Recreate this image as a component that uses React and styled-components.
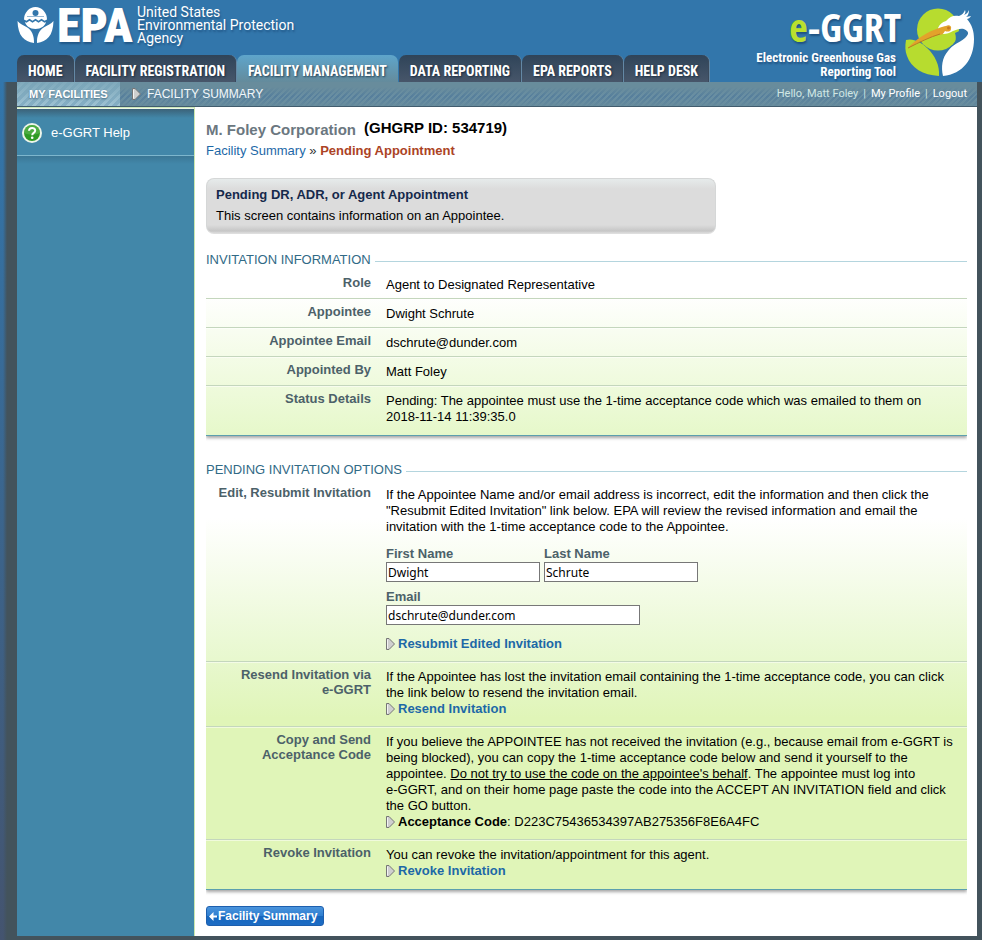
import React from 'react';
import styled, { createGlobalStyle } from 'styled-components';

const slate = '#43535c';
const sans = '"Liberation Sans", Arial, sans-serif';
const condensed = '"Roboto Condensed", "Liberation Sans", sans-serif';

const GlobalStyle = createGlobalStyle`
  * { box-sizing: border-box; }
  body {
    margin: 0;
    background: #3276ab;
    color: #000;
    font: 13px/16px ${sans};
  }
`;

const Page = styled.div`
  display: flex;
  flex-direction: column;
  min-height: 100vh;
`;

const Header = styled.header`
  display: flex;
  justify-content: space-between;
  height: 82px;
  padding: 0 7px 0 17px;
  background: #3276ab;
`;

const HeaderLeft = styled.div`
  display: flex;
  flex-direction: column;
  justify-content: space-between;
`;

const AgencyLink = styled.a`
  display: flex;
  align-items: flex-start;
  gap: 2px;
  padding-top: 6px;
  color: #fff;
  text-decoration: none;
  text-shadow: 1px 2px 2px rgba(0, 30, 70, 0.35);
`;

const AgencyMark = styled.span`
  width: 78px;
  font: 900 48px/40px ${condensed};
`;

const AgencyName = styled.span`
  font: 400 14px/13px Roboto, ${sans};
`;

const Tabs = styled.nav`
  display: flex;
  gap: 1px;
`;

const Tab = styled.a`
  height: 27px;
  padding: 3px 11px 0;
  border-radius: 7px 7px 0 0;
  background: ${p => (p.$active
    ? 'linear-gradient(#5ea5cb, #648b9c)'
    : 'linear-gradient(#2f4459, #47566a)')};
  box-shadow: ${p => (p.$active ? 'none' : 'inset -1px 0 #3a4a5c, 1px 0 #6488a5')};
  color: #fff;
  font: bold 14px/26px ${condensed};
  text-decoration: none;
  text-shadow: 1px 1px 2px rgba(10, 30, 50, 0.7);
  white-space: nowrap;
`;

const Brand = styled.div`
  display: flex;
  gap: 4px;
  color: #fff;
  text-shadow: 1px 2px 2px rgba(0, 30, 70, 0.4);
`;

const BrandText = styled.div`
  display: flex;
  flex-direction: column;
  align-items: flex-end;
  padding-top: 3px;
`;

const BrandTitle = styled.div`
  height: 48px;
  font: bold 40px/48px "Open Sans Condensed", ${condensed};
`;

const BrandInitial = styled.span`
  color: #b9e02f;
`;

const BrandLine = styled.div`
  margin-right: 5px;
  font: bold 13px/14px ${condensed};
`;

const BirdSlot = styled.div`
  padding-top: 6px;
`;

const Body = styled.div`
  flex: 1;
  display: flex;
  flex-direction: column;
  padding: 0 5px 4px 17px;
  background:
    linear-gradient(90deg, rgba(67, 83, 92, 0) 3px, ${slate} 7px) 0 0 / 17px 100% no-repeat,
    linear-gradient(#3276ab, #44546f) 0 0 / 7px 100% no-repeat,
    ${slate};
`;

const SubNav = styled.nav`
  display: flex;
  align-items: center;
  height: 25px;
  border-bottom: 1px solid #415c6e;
  color: #fff;
  font-size: 12px;
  background:
    linear-gradient(#688c9c 20%, rgba(104, 140, 156, 0.4) 60%, rgba(104, 140, 156, 0.9)),
    repeating-linear-gradient(135deg, #4a769c 0 2px, #6990a7 2px 4px);
`;

const SubNavCurrent = styled.a`
  align-self: stretch;
  width: 103px;
  padding-left: 12px;
  color: #fff;
  font: bold 11px/24px ${sans};
  text-decoration: none;
  text-shadow: 0 1px 2px #45697f;
  background:
    linear-gradient(rgba(123, 166, 184, 0.9), rgba(145, 186, 204, 0.5)),
    repeating-linear-gradient(135deg, #79a3bc 0 3px, #a9c9d9 3px 6px);
`;

const SubNavItem = styled.a`
  display: flex;
  align-items: center;
  gap: 5px;
  margin-left: 12px;
  color: #f2f7fa;
  text-decoration: none;
`;

const UserMenu = styled.div`
  display: flex;
  gap: 5px;
  margin-left: auto;
  padding-right: 10px;
  color: #cfe6e4;
  font: 400 11px/24px Roboto, ${sans};
`;

const UserLink = styled.a`
  color: #fff;
  text-decoration: none;
`;

const Columns = styled.div`
  flex: 1;
  display: flex;
  background: #fff;
`;

const Sidebar = styled.aside`
  width: 178px;
  padding-top: 2px;
  border-right: 1px solid #cbe7ae;
  background: linear-gradient(#b9dfa0, #fff) 0 0 / 100% 2px no-repeat, #fff;
`;

const SidebarInner = styled.div`
  height: 100%;
  background: #4287a9;
`;

const HelpLink = styled.a`
  display: flex;
  align-items: center;
  gap: 9px;
  height: 47px;
  padding: 1px 0 0 5px;
  border-bottom: 1px solid #7db6cd;
  color: #fff;
  text-decoration: none;
  background: linear-gradient(#3b6278, #4287a9 9px);
`;

const SidebarShade = styled.div`
  height: 8px;
  background: linear-gradient(#3b7795, #4287a9);
`;

const Main = styled.main`
  flex: 1;
  padding: 12px 10px 9px 11px;
`;

const Company = styled.h1`
  display: flex;
  gap: 8px;
  margin: 0;
  color: #6b7780;
  font: bold 15px/22px ${sans};
`;

const GhgrpId = styled.span`
  color: #000;
  font: bold 15px/18px ${sans};
`;

const Crumbs = styled.nav`
  line-height: 20px;
  color: #333;
`;

const TextLink = styled.a`
  color: #1d68a7;
  font-weight: ${p => (p.$bold ? 'bold' : 'normal')};
  text-decoration: none;
`;

const Current = styled.strong`
  color: #ac4325;
`;

const Intro = styled.section`
  max-width: 510px;
  height: 56px;
  margin: 17px 0 18px;
  padding: 6px 9px;
  border: 1px solid #d5d7d7;
  border-bottom-color: #dedede;
  border-radius: 8px;
  background: linear-gradient(#e6ebeb, #dcdcdc 10px, #dcdcdc 46px, #c6c6c6 52px, #dcdcdc 54px);
`;

const IntroTitle = styled.h2`
  margin: 0;
  color: #15294b;
  font: bold 13px/20px ${sans};
`;

const IntroText = styled.p`
  margin: 0;
  line-height: 21px;
`;

const Section = styled.section`
  margin-bottom: ${p => (p.$last ? 16 : 26)}px;
`;

const SectionTitle = styled.h2`
  display: flex;
  align-items: center;
  gap: 4px;
  margin: 0;
  color: #316a86;
  font: 13px/16px ${sans};
  text-transform: uppercase;

  &::after {
    content: '';
    flex: 1;
    height: 1px;
    margin-top: 2px;
    background: #b4d5de;
  }
`;

const Rows = styled.dl`
  margin: 0;
  padding-top: 2px;
  border-bottom: 1px solid #5c9fae;
  box-shadow: 0 2px 3px rgba(60, 60, 60, 0.45);
  clip-path: inset(0 0 -6px 0);
  background: ${p => (p.$tall
    ? 'linear-gradient(#fff 40px, #e8f8cf 180px, #e0f5b8 240px)'
    : 'linear-gradient(#fff 25px, #e6f8ca)')};
`;

const Row = styled.div`
  display: flex;
  gap: 15px;
  padding: 7px 10px ${p => (p.$tall ? 9 : 5)}px 0;
  border-bottom: 1px solid #c4d6bd;
  box-shadow: 0 1px rgba(255, 255, 255, 0.5);

  &:last-child {
    padding-bottom: 10px;
    border-bottom: 0;
    box-shadow: none;
  }
`;

const Term = styled.dt`
  width: 165px;
  padding-left: 10px;
  margin-top: -2px;
  color: #4c6169;
  font: bold 13px/15px ${sans};
  text-align: right;
`;

const Value = styled.dd`
  flex: 1;
  margin: 0;
`;

const NoWrap = styled.span`
  white-space: nowrap;
`;

const Action = styled.div`
  display: flex;
  align-items: center;
  gap: 2px;
`;

const Form = styled.form`
  display: grid;
  gap: 7px;
  margin: 11px 0;
`;

const FieldLine = styled.div`
  display: flex;
  flex-wrap: wrap;
  gap: 4px;
`;

const Field = styled.label`
  display: flex;
  flex-direction: column;
  width: ${p => (p.$wide ? 254 : 154)}px;
  max-width: 100%;
  color: #4c6169;
  font-weight: bold;
`;

const TextBox = styled.input`
  width: 100%;
  height: 20px;
  padding: 0 1px;
  border: 1px solid #777;
  background: #fff;
  color: #000;
  font: 12px/18px "Noto Sans", ${sans};
`;

const BackButton = styled.button`
  display: flex;
  align-items: center;
  gap: 1px;
  height: 20px;
  padding: 0 6px 0 2px;
  border: 1px solid #1d5fae;
  border-radius: 3px;
  background: linear-gradient(#4a94dc, #2f7ed0 50%, #1767bd 50%, #1d6cc4);
  color: #fff;
  font: bold 12px/18px ${sans};
`;

const EpaFlower = () => (
  <svg width="38" height="38" viewBox="0 0 38 38" aria-hidden="true">
    <g fill="#fff">
      <path d="M7 13.500a11.500 12.500 0 0 1 23 0l-2.500 1.300-3-2-3 2-3-2-3 2-3-2-3 2z" />
      <path d="M8 16l1.500.8 3-2 3 2 3-2 3 2 3-2 3 2 1.500-.8c-1 4-5 7-10.500 7S9 20 8 16z" />
      <path d="M.5 15C1 30 7 35.500 17 37c.3-7-2-13-7.500-16C6.500 19.500 3 18 .5 15z" />
      <path d="M36.500 15C36 30 30 35.500 20 37c-.3-7 2-13 7.500-16 3-1.500 6.500-3 9-6z" />
    </g>
    <circle cx="18.500" cy="7" r="3" fill="#3276ab" />
    <path d="M10 10.500h17" stroke="#3276ab" strokeWidth="1" opacity="0.5" />
  </svg>
);

const Heron = () => (
  <svg width="70" height="72" viewBox="0 0 70 72" aria-hidden="true">
    <circle cx="33" cy="23.500" r="21" fill="#b7dc2f" />
    <path d="M1 34C8 32 16 36 22 42c8 7 13 18 12 28C18 69 6 62 2 50 0 45 0 40 1 34z" fill="#b7dc2f" />
    <path d="M50 27c5-3 10-4 14-1-1 6-4 10-9 13l-8 4c3-5 5-10 3-16z" fill="#3276ab" />
    <path d="M33 22c2-4 4-6 8-7 4-5 8-6 13-5 3-1 5-3 6-6 1 2 0 4-1 5 3-1 4-3 5-5 0 3-1 6-3 7l5-1c-1 2-3 3-4 3 5 6 7 12 7 20 0 20-11 35-31 37-2-9-1-18 5-25 5-7 11-8 17-13 3-3 4-5 2-7-4-4-9-2-14 0-5 3-10 4-13 2z" fill="#fff" />
    <path d="M35 70c-1-9 1-19 7-26" fill="none" stroke="#3276ab" strokeWidth="1" />
    <path d="M3 42C11 33 22 26 34 22c3-1 5-2 7-2 3-2 6 0 5 3 0 3-4 3-6 2-2 3-3 4-6 4-10 2-20 7-31 13z" fill="#e3a22b" />
    <path d="M3 42c12-6 22-11 32-14" fill="none" stroke="#b87b22" strokeWidth="1" />
    <circle cx="43.500" cy="22" r="1.500" fill="#c97822" />
  </svg>
);

const Arrow = () => (
  <svg width="10" height="12" viewBox="0 0 10 12" aria-hidden="true">
    <path d="M.5.5h2.500l5.500 5.500-5.500 5.500H.5z" fill="#cfcfcf" stroke="#767676" />
    <path d="M1.500 1.500v9" stroke="#f3f3f3" />
  </svg>
);

const HelpIcon = () => (
  <svg width="20" height="20" viewBox="0 0 20 20" aria-hidden="true">
    <circle cx="10" cy="10" r="10" fill="#eef5ea" />
    <circle cx="10" cy="10" r="8" fill="#2f9a24" />
    <path d="M2 10a8 8 0 0 1 16 0c-5 2-11 2-16 0z" fill="#62b956" opacity="0.6" />
    <path d="M7 7.800c.2-3.700 6.200-3.700 6.200-.2 0 2.400-3 2.200-3 4.600" fill="none" stroke="#fff" strokeWidth="2" />
    <circle cx="10.200" cy="14.700" r="1.300" fill="#fff" />
  </svg>
);

const BackIcon = () => (
  <svg width="8" height="9" viewBox="0 0 8 9" aria-hidden="true">
    <path d="M0 4.500L4.500 0v3.500H8v2H4.500V9z" fill="#fff" />
  </svg>
);

const tabs = ['HOME', 'FACILITY REGISTRATION', 'FACILITY MANAGEMENT', 'DATA REPORTING', 'EPA REPORTS', 'HELP DESK'];

const invitation = [
  ['Role', 'Agent to Designated Representative'],
  ['Appointee', 'Dwight Schrute'],
  ['Appointee Email', 'dschrute@dunder.com'],
  ['Appointed By', 'Matt Foley'],
  ['Status Details', 'Pending: The appointee must use the 1-time acceptance code which was emailed to them on 2018-11-14 11:39:35.0'],
];

export default function App() {
  return (
    <Page>
      <GlobalStyle />
      <Header>
        <HeaderLeft>
          <AgencyLink href="#epa">
            <EpaFlower />
            <AgencyMark>EPA</AgencyMark>
            <AgencyName>United States<br />Environmental Protection<br />Agency</AgencyName>
          </AgencyLink>
          <Tabs>
            {tabs.map(name => (
              <Tab key={name} href="#tab" $active={name === 'FACILITY MANAGEMENT'}>{name}</Tab>
            ))}
          </Tabs>
        </HeaderLeft>
        <Brand>
          <BrandText>
            <BrandTitle><BrandInitial>e</BrandInitial>-GGRT</BrandTitle>
            <BrandLine>Electronic Greenhouse Gas</BrandLine>
            <BrandLine>Reporting Tool</BrandLine>
          </BrandText>
          <BirdSlot><Heron /></BirdSlot>
        </Brand>
      </Header>
      <Body>
        <SubNav>
          <SubNavCurrent href="#facilities">MY FACILITIES</SubNavCurrent>
          <SubNavItem href="#summary"><Arrow />FACILITY SUMMARY</SubNavItem>
          <UserMenu>
            <span>Hello, Matt Foley</span>
            <span>|</span>
            <UserLink href="#profile">My Profile</UserLink>
            <span>|</span>
            <UserLink href="#logout">Logout</UserLink>
          </UserMenu>
        </SubNav>
        <Columns>
          <Sidebar>
            <SidebarInner>
              <HelpLink href="#help"><HelpIcon />e-GGRT Help</HelpLink>
              <SidebarShade />
            </SidebarInner>
          </Sidebar>
          <Main>
            <Company>M. Foley Corporation <GhgrpId>(GHGRP ID: 534719)</GhgrpId></Company>
            <Crumbs>
              <TextLink href="#summary">Facility Summary</TextLink> » <Current>Pending Appointment</Current>
            </Crumbs>
            <Intro>
              <IntroTitle>Pending DR, ADR, or Agent Appointment</IntroTitle>
              <IntroText>This screen contains information on an Appointee.</IntroText>
            </Intro>

            <Section>
              <SectionTitle>Invitation Information</SectionTitle>
              <Rows>
                {invitation.map(([term, value]) => (
                  <Row key={term}>
                    <Term>{term}</Term>
                    <Value>{value}</Value>
                  </Row>
                ))}
              </Rows>
            </Section>

            <Section $last>
              <SectionTitle>Pending Invitation Options</SectionTitle>
              <Rows $tall>
                <Row $tall>
                  <Term>Edit, Resubmit Invitation</Term>
                  <Value>
                    If the Appointee Name and/or email address is incorrect, edit the information and then click the
                    {' '}"Resubmit Edited Invitation" link below. EPA will review the revised information and email the
                    invitation with the 1-time acceptance code to the Appointee.
                    <Form>
                      <FieldLine>
                        <Field>First Name<TextBox type="text" defaultValue="Dwight" /></Field>
                        <Field>Last Name<TextBox type="text" defaultValue="Schrute" /></Field>
                      </FieldLine>
                      <Field $wide>Email<TextBox type="text" defaultValue="dschrute@dunder.com" /></Field>
                    </Form>
                    <Action><Arrow /><TextLink $bold href="#resubmit">Resubmit Edited Invitation</TextLink></Action>
                  </Value>
                </Row>
                <Row $tall>
                  <Term>Resend Invitation via <NoWrap>e-GGRT</NoWrap></Term>
                  <Value>
                    If the Appointee has lost the invitation email containing the 1-time acceptance code, you can click
                    the link below to resend the invitation email.
                    <Action><Arrow /><TextLink $bold href="#resend">Resend Invitation</TextLink></Action>
                  </Value>
                </Row>
                <Row $tall>
                  <Term>Copy and Send Acceptance Code</Term>
                  <Value>
                    If you believe the APPOINTEE has not received the invitation (e.g., because email from e-GGRT is
                    being blocked), you can copy the 1-time acceptance code below and send it yourself to the
                    appointee. <u>Do not try to use the code on the appointee's behalf</u>. The appointee must log into{' '}
                    <NoWrap>e-GGRT,</NoWrap> and on their home page paste the code into the ACCEPT AN INVITATION field and click
                    the GO button.
                    <Action><Arrow /><span><strong>Acceptance Code</strong>: D223C75436534397AB275356F8E6A4FC</span></Action>
                  </Value>
                </Row>
                <Row $tall>
                  <Term>Revoke Invitation</Term>
                  <Value>
                    You can revoke the invitation/appointment for this agent.
                    <Action><Arrow /><TextLink $bold href="#revoke">Revoke Invitation</TextLink></Action>
                  </Value>
                </Row>
              </Rows>
            </Section>
            <BackButton type="button"><BackIcon />Facility Summary</BackButton>
          </Main>
        </Columns>
      </Body>
    </Page>
  );
}
